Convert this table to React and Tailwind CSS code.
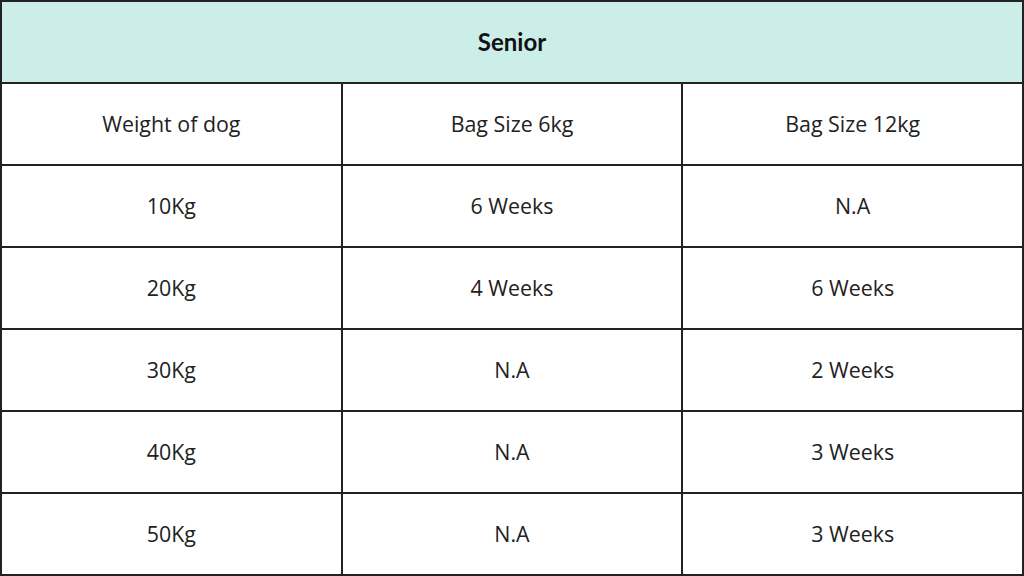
const ROWS = [
  ["Weight of dog", "Bag Size 6kg", "Bag Size 12kg"],
  ["10Kg", "6 Weeks", "N.A"],
  ["20Kg", "4 Weeks", "6 Weeks"],
  ["30Kg", "N.A", "2 Weeks"],
  ["40Kg", "N.A", "3 Weeks"],
  ["50Kg", "N.A", "3 Weeks"],
];

export default function App() {
  return (
    <div className="w-[1024px] h-[576px] bg-[#222222] p-[2px] grid grid-cols-3 grid-rows-7 gap-[2px]">
      {/* Header */}
      <div className="col-span-3 bg-[#cbeee9] flex items-center justify-center">
        <span className="text-[24px] font-bold text-[#111] [font-family:Lato,'Noto_Sans',sans-serif]">Senior</span>
      </div>
      {ROWS.map((row, i) =>
        row.map((cell, j) => (
          <div key={`${i}-${j}`} className="bg-white flex items-center justify-center">
            <span className="text-[21.4px] text-[#222] [font-family:'Open_Sans',sans-serif]">{cell}</span>
          </div>
        ))
      )}
    </div>
  );
}
